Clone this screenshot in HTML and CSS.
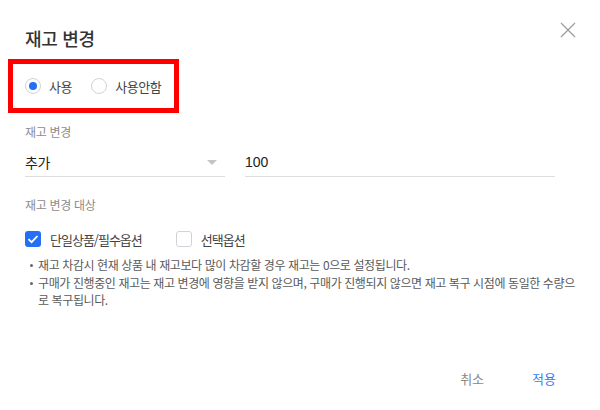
FILE: index.html
```html
<!DOCTYPE html>
<html lang="ko">
<head>
    <meta charset="UTF-8">
    <title>재고 변경</title>
    <link rel="stylesheet" href="styles.css">
</head>
<body>
    <div class="dialog">
        <div class="dialog-header">
            <h2>재고 변경</h2>
            <button class="close-button" aria-label="닫기">
                <svg width="16" height="16" viewBox="0 0 16 16">
                    <path d="M1 1 L15 15 M15 1 L1 15" stroke="#9a9a9a" stroke-width="1.2" fill="none"/>
                </svg>
            </button>
        </div>

        <div class="radio-group">
            <label class="radio">
                <span class="radio-mark checked"></span> 사용
            </label>
            <label class="radio">
                <span class="radio-mark"></span> 사용안함
            </label>
        </div>

        <div class="field-label">재고 변경</div>
        <div class="field-row">
            <div class="select-field">
                <span>추가</span>
                <span class="select-arrow"></span>
            </div>
            <div class="text-field">100</div>
        </div>

        <div class="field-label target-label">재고 변경 대상</div>
        <div class="check-row">
            <label class="check">
                <span class="check-mark checked">
                    <svg width="16" height="16" viewBox="0 0 16 16">
                        <path d="M3.5 8.2 L6.6 11.2 L12.5 5" stroke="#fff" stroke-width="1.8" fill="none"/>
                    </svg>
                </span> 단일상품/필수옵션
            </label>
            <label class="check">
                <span class="check-mark"></span> 선택옵션
            </label>
        </div>

        <ul class="notice">
            <li>재고 차감시 현재 상품 내 재고보다 많이 차감할 경우 재고는 0으로 설정됩니다.</li>
            <li>구매가 진행중인 재고는 재고 변경에 영향을 받지 않으며, 구매가 진행되지 않으면 재고 복구 시점에 동일한 수량으로 복구됩니다.</li>
        </ul>

        <div class="dialog-footer">
            <button class="text-button">취소</button>
            <button class="text-button primary">적용</button>
        </div>
    </div>
</body>
</html>
```

FILE: styles.css
```css
body {
    margin: 0;
    background-color: #fff;
    font-family: "Noto Sans CJK KR", "Noto Sans", sans-serif;
    color: #222;
}
.dialog {
    width: 600px;
    height: 410px;
    box-sizing: border-box;
    padding: 25px 20px 0 25px;
}
.dialog-header {
    display: flex;
    justify-content: space-between;
    align-items: flex-start;
}
.dialog-header h2 {
    margin: 0;
    font-size: 18px;
    line-height: 26px;
    font-weight: 500;
    color: #333;
    letter-spacing: -0.3px;
}
.close-button {
    border: none;
    background: none;
    padding: 0;
    margin: -3px 4px 0 0;
    width: 16px;
    height: 16px;
    cursor: pointer;
}
.radio-group {
    display: flex;
    align-items: center;
    gap: 19px;
    width: 171px;
    height: 54px;
    box-sizing: border-box;
    margin: 8px 0 0 -17px;
    padding-left: 12px;
    border: 5px solid #ff0000;
}
.radio, .check {
    display: flex;
    align-items: center;
    gap: 8px;
    font-size: 13px;
    letter-spacing: -0.4px;
    color: #444;
}
.radio-mark {
    width: 16px;
    height: 16px;
    box-sizing: border-box;
    border: 1px solid #cfd3d8;
    border-radius: 50%;
    display: flex;
    align-items: center;
    justify-content: center;
}
.radio-mark.checked::after {
    content: "";
    width: 8px;
    height: 8px;
    border-radius: 50%;
    background-color: #2370f4;
}
.field-label {
    margin-top: 10px;
    font-size: 12px;
    line-height: 18px;
    color: #8c8c8c;
    letter-spacing: -0.3px;
}
.field-row {
    display: flex;
    gap: 20px;
    margin-top: 11px;
}
.select-field, .text-field {
    display: flex;
    align-items: center;
    justify-content: space-between;
    font-size: 14px;
    line-height: 20px;
    padding-bottom: 4px;
    border-bottom: 1px solid #dedede;
    color: #222;
}
.select-field {
    width: 200px;
    letter-spacing: -0.3px;
}
.text-field {
    width: 310px;
    font-family: "Liberation Sans", sans-serif;
}
.select-arrow {
    width: 0;
    height: 0;
    margin-right: 8px;
    border-left: 5px solid transparent;
    border-right: 5px solid transparent;
    border-top: 5px solid #c4c4c4;
}
.target-label {
    margin-top: 19px;
}
.check-row {
    display: flex;
    align-items: center;
    gap: 34px;
    height: 20px;
    margin-top: 15px;
}
.check {
    gap: 9px;
    letter-spacing: -1px;
}
.check-mark {
    width: 16px;
    height: 16px;
    box-sizing: border-box;
    border: 1px solid #cfd3d8;
    border-radius: 3px;
    display: flex;
}
.check-mark.checked {
    border: none;
    background-color: #2370f4;
}
.notice {
    margin: 7px 0 0;
    padding: 0 0 0 13px;
    font-size: 12px;
    line-height: 17.5px;
    color: #5a5a5a;
    letter-spacing: -0.4px;
}
.notice li {
    list-style: none;
    position: relative;
}
.notice li::before {
    content: "";
    position: absolute;
    left: -8px;
    top: 8px;
    width: 3px;
    height: 3px;
    border-radius: 50%;
    background-color: #666;
}
.dialog-footer {
    display: flex;
    justify-content: flex-end;
    margin-top: 52px;
}
.text-button {
    border: none;
    background: none;
    padding: 8px 24px;
    font-family: "Noto Sans CJK KR", sans-serif;
    font-size: 13px;
    line-height: 20px;
    color: #888;
    cursor: pointer;
}
.text-button.primary {
    color: #2f7df6;
}
```
